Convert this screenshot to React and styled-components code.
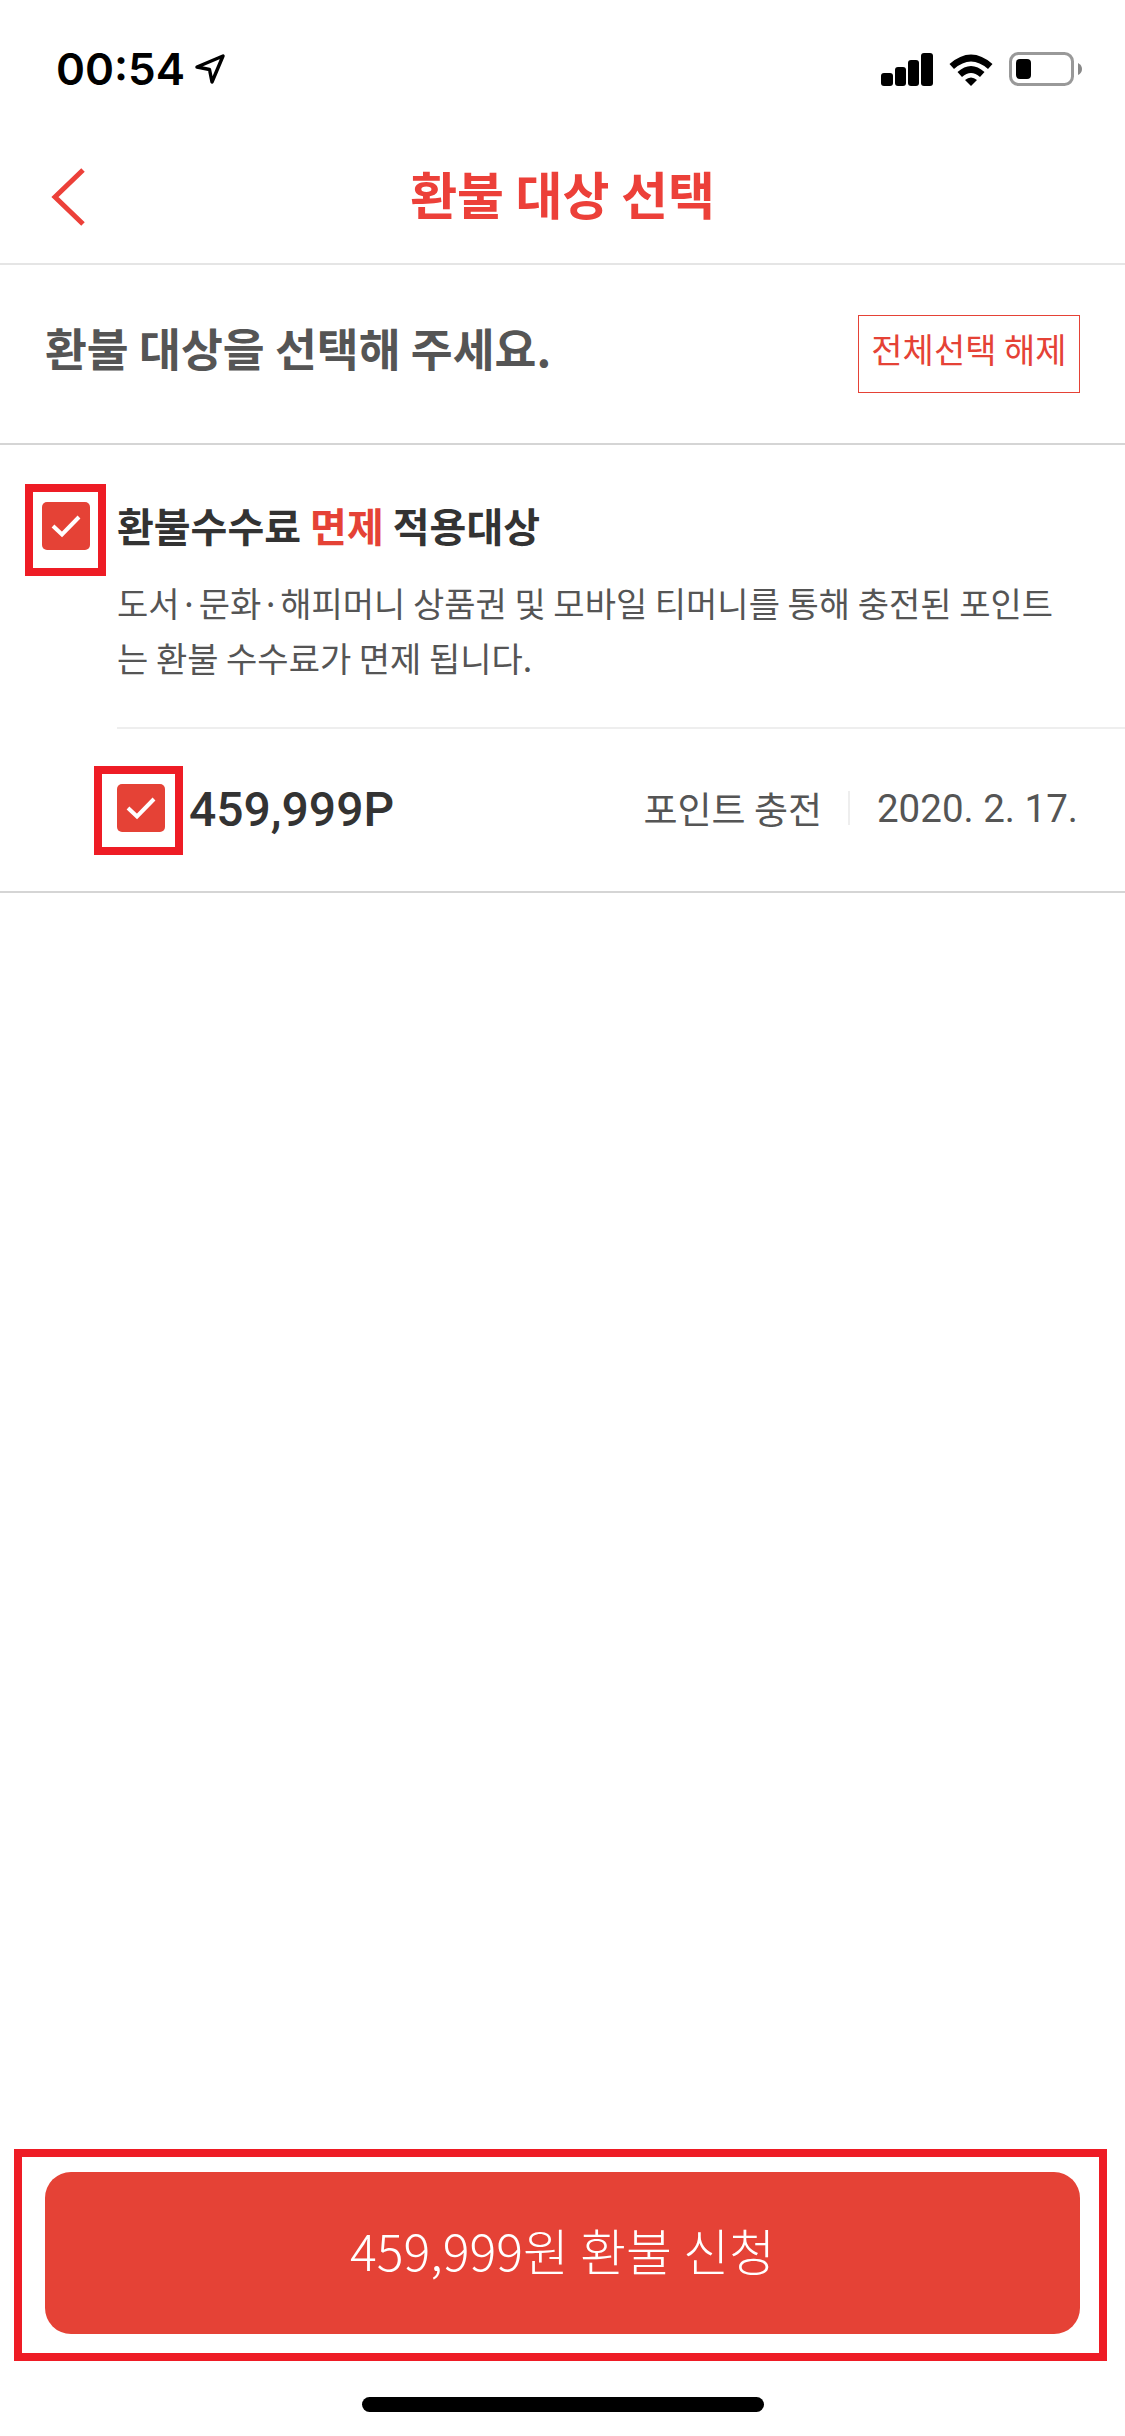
import React from "react";
import styled, { createGlobalStyle } from "styled-components";

const KR = `"Noto Sans CJK KR", "Noto Sans", sans-serif`;
const RED = "#e54236";
const MARK = "#ee1c25";

const GlobalStyle = createGlobalStyle`
  html, body {
    margin: 0;
    padding: 0;
    background: #fff;
  }
`;

const Page = styled.div`
  width: 1125px;
  height: 2436px;
  display: flex;
  flex-direction: column;
  background: #fff;
  font-family: ${KR};
  overflow: hidden;
`;
const StatusBar = styled.div`
  height: 128px;
  box-sizing: border-box;
  padding: 52px 43px 0 56px;
  display: flex;
  justify-content: space-between;
  align-items: flex-start;
`;
const TimeWrap = styled.div`
  display: flex;
  align-items: center;
  gap: 10px;
  height: 34px;
`;
const Time = styled.span`
  font-family: Inter, sans-serif;
  font-size: 44px;
  font-weight: 600;
  line-height: 34px;
  color: #000;
`;
const StatusIcons = styled.div`
  display: flex;
  align-items: flex-start;
  gap: 15px;
`;
const Nav = styled.div`
  height: 137px;
  box-sizing: border-box;
  padding-bottom: 5px;
  flex: none;
  position: relative;
  display: flex;
  align-items: center;
  justify-content: center;
  border-bottom: 2px solid #e5e5e5;
`;
const BackIcon = styled.svg`
  position: absolute;
  left: 50px;
  top: 39px;
`;
const NavTitle = styled.div`
  font-size: 51px;
  font-weight: 700;
  color: #ec4039;
`;
const SelectBar = styled.div`
  height: 180px;
  box-sizing: border-box;
  padding: 50px 45px 0 45px;
  display: flex;
  justify-content: space-between;
  align-items: flex-start;
  border-bottom: 2px solid #d5d5d5;
`;
const SelectTitle = styled.div`
  font-size: 45.5px;
  font-weight: 700;
  line-height: 64px;
  color: #555;
`;
const OutlineButton = styled.div`
  width: 222px;
  height: 78px;
  box-sizing: border-box;
  border: 1px solid ${RED};
  display: flex;
  justify-content: center;
  padding-top: 10px;
  font-size: 34px;
  line-height: 46px;
  color: ${RED};
  white-space: nowrap;
`;
const GroupHead = styled.div`
  display: flex;
  align-items: flex-start;
  gap: 27px;
  padding: 57px 40px 0 42px;
`;
const GroupText = styled.div`
  display: flex;
  flex-direction: column;
  width: 950px;
`;
const GroupTitle = styled.div`
  font-size: 40px;
  font-weight: 700;
  line-height: 46px;
  color: #333;
`;
const Accent = styled.span`
  color: ${RED};
`;
const GroupDesc = styled.div`
  margin-top: 27px;
  font-size: 34px;
  line-height: 55px;
  color: #555;
`;
const ItemRow = styled.div`
  margin: 42px 0 0 117px;
  height: 164px;
  box-sizing: border-box;
  padding: 0 47px 4px 0;
  border-top: 2px solid #eee;
  display: flex;
  align-items: center;
`;
const Amount = styled.div`
  margin: 2px 0 0 24px;
  font-family: Roboto, sans-serif;
  font-size: 48px;
  font-weight: 500;
  color: #333;
`;
const Meta = styled.div`
  margin-left: auto;
  display: flex;
  align-items: center;
  font-size: 37px;
  color: #555;
`;
const MetaDivider = styled.div`
  width: 2px;
  height: 34px;
  margin: 0 27px 0 26px;
  background: #eee;
`;
const MetaDate = styled.span`
  font-family: Roboto, sans-serif;
  font-size: 38.5px;
`;
const RowLine = styled.div`
  height: 2px;
  background: #d5d5d5;
`;
const Spacer = styled.div`
  flex: 1;
`;
const Footer = styled.div`
  padding: 0 45px;
`;
const SubmitButton = styled.div`
  position: relative;
  height: 162px;
  box-sizing: border-box;
  padding-bottom: 8px;
  border-radius: 26px;
  background: ${RED};
  color: #fff;
  display: flex;
  align-items: center;
  justify-content: center;
  font-size: 50px;
  font-weight: 300;
`;
const HomeBar = styled.div`
  flex: none;
  width: 402px;
  height: 15px;
  margin: 63px auto 24px;
  border-radius: 8px;
  background: #000;
`;
const CheckBox = styled.div`
  position: relative;
  flex: none;
  width: 48px;
  height: 48px;
  border-radius: 5px;
  background: ${RED};
  display: flex;
  align-items: center;
  justify-content: center;
`;
// 캡처에 덧그려진 빨간 표시 박스
const Highlight = styled.div`
  position: absolute;
  top: ${({ $t }) => $t}px;
  right: ${({ $r }) => $r}px;
  bottom: ${({ $b }) => $b}px;
  left: ${({ $l }) => $l}px;
  border: 8px solid ${MARK};
`;

const Check = ({ t, r, b, l }) => (
  <CheckBox>
    <svg width="30" height="24" viewBox="0 0 30 24" fill="none">
      <path d="M2 12 L11 20.5 L28 3" stroke="#fff" strokeWidth="4" />
    </svg>
    <Highlight $t={t} $r={r} $b={b} $l={l} />
  </CheckBox>
);

const App = () => (
  <Page>
    <GlobalStyle />
    <StatusBar>
      <TimeWrap>
        <Time>00:54</Time>
        <svg width="30" height="30" viewBox="0 0 30 30" fill="none">
          <path
            d="M2 13 L28 2 L17 28 L14.5 15.5 Z"
            stroke="#000"
            strokeWidth="3.4"
            strokeLinejoin="round"
          />
        </svg>
      </TimeWrap>
      <StatusIcons>
        <svg width="52" height="34" viewBox="0 0 52 34">
          <rect x="0" y="21" width="12" height="13" rx="3" fill="#000" />
          <rect x="14" y="15" width="11" height="19" rx="3" fill="#000" />
          <rect x="27" y="8" width="11" height="26" rx="3" fill="#000" />
          <rect x="40" y="1" width="12" height="33" rx="3" fill="#000" />
        </svg>
        <svg width="46" height="34" viewBox="0 0 46 34" fill="none">
          <path d="M1.5 12 Q23 -7 44.5 12 L40 17 Q23 2 6 17 Z" fill="#000" />
          <path d="M9.5 20 Q23 8 36.5 20 L32 25 Q23 17 14 25 Z" fill="#000" />
          <path d="M17 28 Q23 23 29 28 L23 34 Z" fill="#000" />
        </svg>
        <svg width="73" height="34" viewBox="0 0 73 34" fill="none">
          <rect x="1.5" y="1.5" width="62" height="31" rx="8" stroke="#999" strokeWidth="3" />
          <rect x="7" y="7" width="15" height="20" rx="4" fill="#000" />
          <path d="M69 11 Q73 13 73 17 Q73 21 69 23 Z" fill="#888" />
        </svg>
      </StatusIcons>
    </StatusBar>
    <Nav>
      <BackIcon width="37" height="60" viewBox="0 0 37 60" fill="none">
        <path d="M33 3 L5 30 L33 57" stroke="#ec4039" strokeWidth="5" />
      </BackIcon>
      <NavTitle>환불 대상 선택</NavTitle>
    </Nav>
    <SelectBar>
      <SelectTitle>환불 대상을 선택해 주세요.</SelectTitle>
      <OutlineButton>전체선택 해제</OutlineButton>
    </SelectBar>
    <GroupHead>
      <Check t={-18} r={-16} b={-26} l={-17} />
      <GroupText>
        <GroupTitle>
          환불수수료 <Accent>면제</Accent> 적용대상
        </GroupTitle>
        <GroupDesc>
          도서·문화·해피머니 상품권 및 모바일 티머니를 통해 충전된 포인트
          <br />는 환불 수수료가 면제 됩니다.
        </GroupDesc>
      </GroupText>
    </GroupHead>
    <ItemRow>
      <Check t={-18} r={-18} b={-23} l={-23} />
      <Amount>459,999P</Amount>
      <Meta>
        포인트 충전
        <MetaDivider />
        <MetaDate>2020. 2. 17.</MetaDate>
      </Meta>
    </ItemRow>
    <RowLine />
    <Spacer />
    <Footer>
      <SubmitButton>
        459,999원 환불 신청
        <Highlight $t={-23} $r={-27} $b={-27} $l={-31} />
      </SubmitButton>
    </Footer>
    <HomeBar />
  </Page>
);

export default App;
